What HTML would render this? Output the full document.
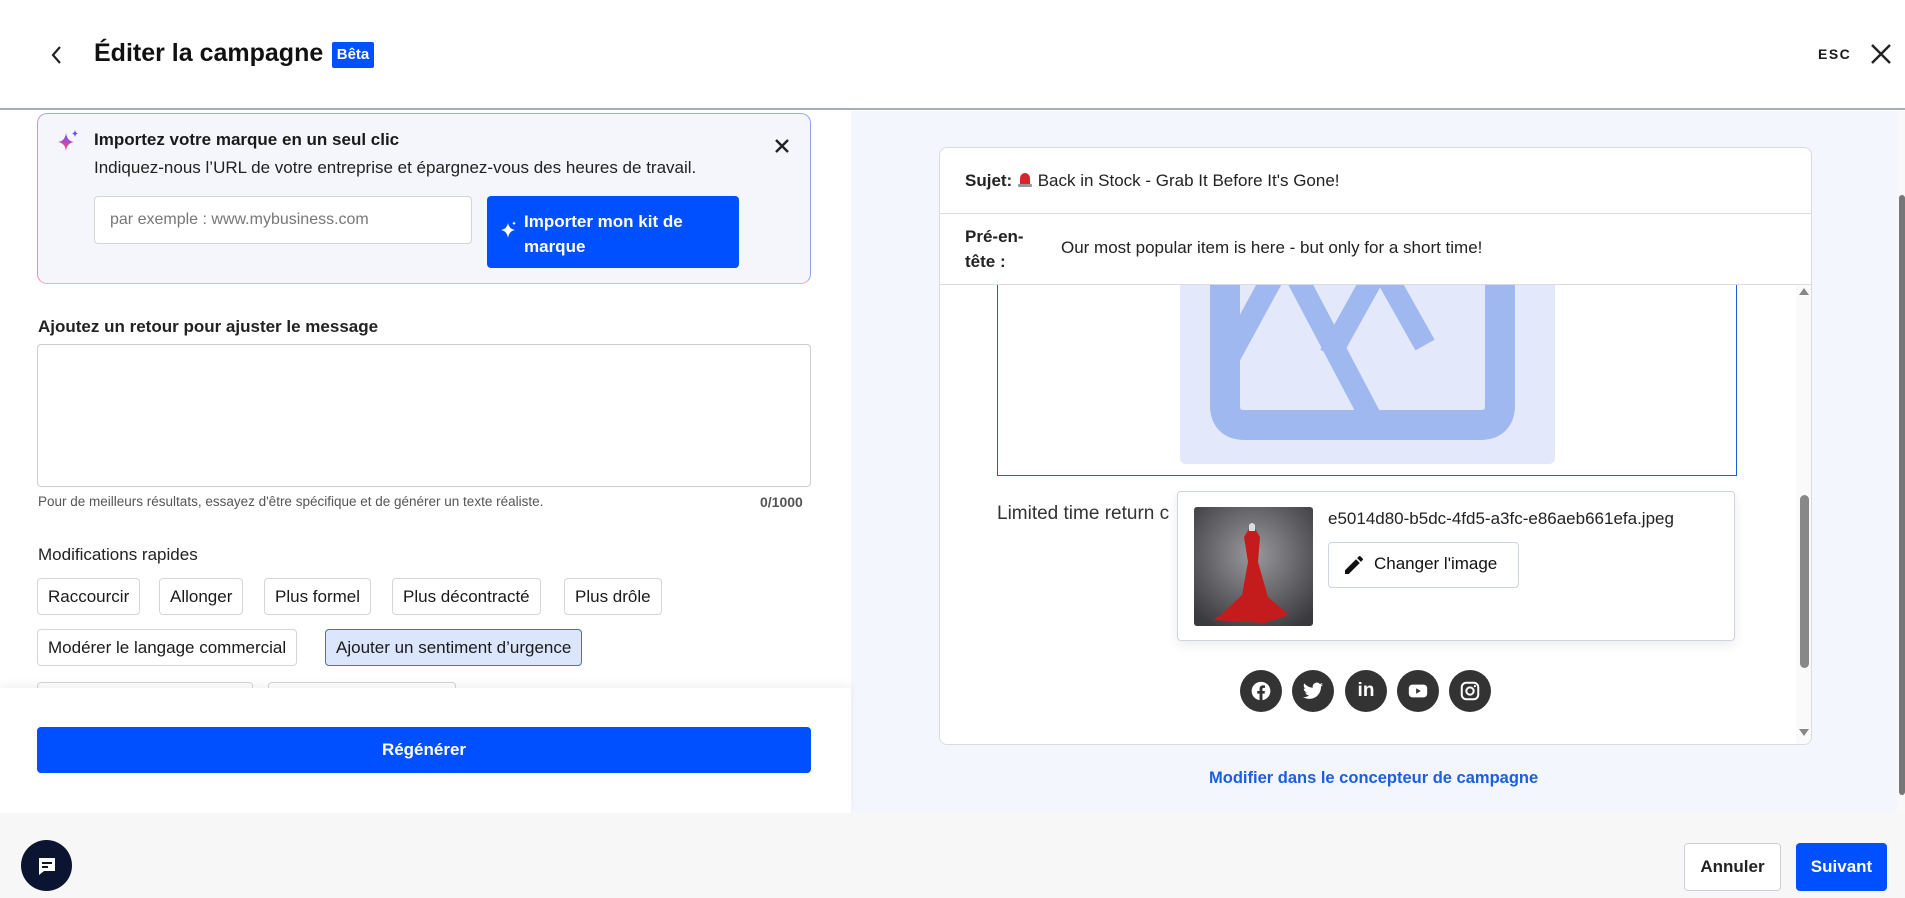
<!DOCTYPE html>
<html><head><meta charset="utf-8"><style>
*{box-sizing:border-box;margin:0;padding:0}
body{width:1905px;height:898px;overflow:hidden;font-family:"Liberation Sans",sans-serif;color:#1a1a1a;background:#fff;position:relative}
.abs{position:absolute}
.chip{position:absolute;height:37px;border:1px solid #d4d6dc;border-radius:4px;background:#fff;font-size:17px;line-height:35px;padding:0 10px;color:#1a1a1a;white-space:nowrap}
.soc{position:absolute;top:670px;width:42px;height:42px;border-radius:50%;background:#333;display:flex;align-items:center;justify-content:center}
</style></head><body>
<!-- header -->
<div class="abs" style="left:0;top:0;width:1905px;height:110px;background:#fff;border-bottom:2px solid #a9adb8"></div>
<svg class="abs" style="left:48px;top:44px" width="18" height="22" viewBox="0 0 18 22"><path d="M12 3L5 11l7 8" stroke="#222" stroke-width="2.2" fill="none"/></svg>
<div class="abs" style="left:94px;top:39px;font-size:25px;font-weight:bold;color:#111">Éditer la campagne</div>
<div class="abs" style="left:332px;top:42px;width:42px;height:26px;background:#0050ff;color:#fff;font-size:15px;font-weight:bold;line-height:26px;text-align:center;border-radius:2px">Bêta</div>
<div class="abs" style="left:1818px;top:46px;font-size:14px;font-weight:bold;letter-spacing:1.5px">ESC</div>
<svg class="abs" style="left:1870px;top:43px" width="22" height="22" viewBox="0 0 22 22"><path d="M2 2L20 20M20 2L2 20" stroke="#222" stroke-width="2.4"/></svg>

<!-- right panel bg -->
<div class="abs" style="left:851px;top:111px;width:1046px;height:702px;background:#f3f6fd"></div>
<div class="abs" style="left:1897px;top:111px;width:8px;height:702px;background:#f8f8f8"></div>
<div class="abs" style="left:1899px;top:195px;width:6px;height:600px;background:#777;border-radius:3px"></div>

<!-- import card -->
<div class="abs" style="left:37px;top:113px;width:774px;height:171px;border-radius:10px;background:#f5f6fc;border:1px solid #c8c4e8;border-left-color:#e890b0;border-bottom-color:#eab0c4;border-top-color:#9aa8ee;border-right-color:#8fa4f0"></div>
<svg class="abs" style="left:56px;top:129px" width="24" height="26" viewBox="0 0 24 26"><defs><linearGradient id="g" x1="0" y1="0" x2="0" y2="1"><stop offset="0" stop-color="#6a4cff"/><stop offset="1" stop-color="#ff4d7a"/></linearGradient></defs><path d="M10 4Q11 12 18 13Q11 14 10 22Q9 14 2 13Q9 12 10 4Z" fill="url(#g)"/><path d="M19 1Q19.5 4 22 4.5Q19.5 5 19 8Q18.5 5 16 4.5Q18.5 4 19 1Z" fill="#6a4cff"/></svg>
<div class="abs" style="left:94px;top:130px;font-size:17px;font-weight:bold">Importez votre marque en un seul clic</div>
<div class="abs" style="left:94px;top:158px;font-size:17px;color:#222">Indiquez-nous l’URL de votre entreprise et épargnez-vous des heures de travail.</div>
<svg class="abs" style="left:774px;top:138px" width="16" height="16" viewBox="0 0 16 16"><path d="M2 2L14 14M14 2L2 14" stroke="#222" stroke-width="2.4"/></svg>
<div class="abs" style="left:94px;top:196px;width:378px;height:48px;background:#fff;border:1px solid #d4d6dc;border-radius:4px;font-size:16px;color:#777;line-height:46px;padding-left:15px">par exemple : www.mybusiness.com</div>
<div class="abs" style="left:487px;top:196px;width:252px;height:72px;background:#0050ff;border-radius:4px"></div>
<svg class="abs" style="left:501px;top:221px" width="16" height="18" viewBox="0 0 16 18"><path d="M7 2Q8 8 14 9Q8 10 7 17Q6 10 0 9Q6 8 7 2Z" fill="#fff"/><path d="M13 0Q13.3 2 15 2.3Q13.3 2.6 13 4.5Q12.7 2.6 11 2.3Q12.7 2 13 0Z" fill="#fff"/></svg>
<div class="abs" style="left:524px;top:209px;font-size:17px;font-weight:bold;color:#fff;line-height:25px">Importer mon kit de<br>marque</div>

<!-- feedback -->
<div class="abs" style="left:38px;top:317px;font-size:17px;font-weight:bold;color:#222">Ajoutez un retour pour ajuster le message</div>
<div class="abs" style="left:37px;top:344px;width:774px;height:143px;border:1px solid #c9ccd3;border-radius:4px;background:#fff"></div>
<div class="abs" style="left:38px;top:494px;font-size:13.5px;color:#555">Pour de meilleurs résultats, essayez d'être spécifique et de générer un texte réaliste.</div>
<div class="abs" style="left:760px;top:494px;font-size:14px;color:#555;font-weight:bold">0/1000</div>

<div class="abs" style="left:38px;top:545px;font-size:17px;color:#222">Modifications rapides</div>
<div class="chip" style="left:37px;top:578px">Raccourcir</div>
<div class="chip" style="left:159px;top:578px">Allonger</div>
<div class="chip" style="left:264px;top:578px">Plus formel</div>
<div class="chip" style="left:392px;top:578px">Plus décontracté</div>
<div class="chip" style="left:564px;top:578px">Plus drôle</div>
<div class="chip" style="left:37px;top:629px">Modérer le langage commercial</div>
<div class="chip" style="left:325px;top:629px;background:#dbe6fd;border-color:#3b6ff0">Ajouter un sentiment d’urgence</div>
<div class="chip" style="left:37px;top:682px;width:216px"></div>
<div class="chip" style="left:268px;top:682px;width:188px"></div>
<!-- footer of left panel -->
<div class="abs" style="left:0;top:688px;width:851px;height:125px;background:#fff;box-shadow:0 -4px 8px rgba(0,0,0,0.05)"></div>
<div class="abs" style="left:37px;top:727px;width:774px;height:46px;background:#0050ff;border-radius:4px;color:#fff;font-weight:bold;font-size:17px;text-align:center;line-height:46px">Régénérer</div>

<!-- preview card -->
<div class="abs" style="left:939px;top:147px;width:873px;height:598px;background:#fff;border:1px solid #d8dbe2;border-radius:8px;overflow:hidden">
  <div class="abs" style="left:0;top:0;width:873px;height:66px;border-bottom:1px solid #d8dbe2"></div>
  <div class="abs" style="left:25px;top:23px;font-size:17px;color:#222"><b>Sujet:</b> <svg width="16" height="17" viewBox="0 0 16 17" style="vertical-align:-2px"><path d="M3 13V7a5 5 0 0 1 10 0v6z" fill="#d9232d"/><rect x="1" y="13" width="14" height="3" rx="1" fill="#999"/></svg> Back in Stock - Grab It Before It's Gone!</div>
  <div class="abs" style="left:0;top:66px;width:873px;height:71px;border-bottom:1px solid #d8dbe2"></div>
  <div class="abs" style="left:25px;top:76px;font-size:17px;font-weight:bold;line-height:25px;color:#222">Pré-en-<br>tête :</div>
  <div class="abs" style="left:121px;top:90px;font-size:17px;color:#222">Our most popular item is here - but only for a short time!</div>
  <!-- image block -->
  <div class="abs" style="left:57px;top:137px;width:740px;height:191px;border:1px solid #1a5fe0;border-top:none"></div>
  <div class="abs" style="left:240px;top:137px;width:375px;height:179px;background:#e3e9fb;border-radius:0 0 6px 6px;overflow:hidden">
    <svg width="375" height="179" viewBox="0 0 375 179"><path d="M45 0V120Q45 140 65 140H300Q320 140 320 120V0" stroke="#a0b8f0" stroke-width="30" fill="none"/><path d="M45 80L105 -30L200 150M150 70L200 -20L245 60" stroke="#a0b8f0" stroke-width="22" fill="none"/></svg>
  </div>
  <div class="abs" style="left:57px;top:355px;font-size:19px;color:#333">Limited time return c</div>
  <!-- scrollbar -->
  <div class="abs" style="left:856px;top:137px;width:17px;height:461px;background:#fafafa"></div>
  <div class="abs" style="left:859px;top:140px;width:0;height:0;border-left:5px solid transparent;border-right:5px solid transparent;border-bottom:7px solid #888"></div>
  <div class="abs" style="left:859px;top:581px;width:0;height:0;border-left:5px solid transparent;border-right:5px solid transparent;border-top:7px solid #888"></div>
  <div class="abs" style="left:860px;top:347px;width:9px;height:173px;background:#888;border-radius:5px"></div>
</div>
<!-- popup -->
<div class="abs" style="left:1177px;top:491px;width:558px;height:150px;background:#fff;border:1px solid #cdd3e0;border-radius:4px;box-shadow:0 4px 12px rgba(0,0,0,0.08)"></div>
<svg class="abs" style="left:1194px;top:507px;border-radius:3px" width="119" height="119" viewBox="0 0 119 119"><defs><radialGradient id="bg" cx="0.5" cy="0.4" r="0.7"><stop offset="0" stop-color="#9a9a9e"/><stop offset="1" stop-color="#3a3a3e"/></radialGradient></defs><rect width="119" height="119" fill="url(#bg)"/><path d="M56 20L60 20L66 30L64 55L74 90L95 108L70 116L20 113L30 105L48 88L54 55L50 30Z" fill="#c41c1c"/><path d="M55 18Q58 14 61 18L61 24L55 24Z" fill="#ddd"/></svg>
<div class="abs" style="left:1328px;top:509px;font-size:17px;color:#222">e5014d80-b5dc-4fd5-a3fc-e86aeb661efa.jpeg</div>
<div class="abs" style="left:1328px;top:542px;width:191px;height:46px;border:1px solid #cdd3e0;border-radius:4px;background:#fff"></div>
<svg class="abs" style="left:1342px;top:553px" width="24" height="24" viewBox="0 0 24 24"><path d="M3 17.25V21h3.75L17.81 9.94l-3.75-3.75L3 17.25zM20.71 7.04a1 1 0 0 0 0-1.41l-2.34-2.34a1 1 0 0 0-1.41 0l-1.830 1.83 3.75 3.75 1.83-1.83z" fill="#111"/></svg>
<div class="abs" style="left:1374px;top:554px;font-size:17px;color:#111">Changer l'image</div>
<!-- social -->
<div class="soc" style="left:1240px"><svg width="22" height="22" viewBox="0 0 24 24"><path d="M12 2a10 10 0 0 0-1.6 19.9V14.9H7.9V12h2.5V9.8c0-2.5 1.5-3.9 3.8-3.9 1.1 0 2.2.2 2.2.2v2.5h-1.3c-1.2 0-1.6.8-1.6 1.6V12h2.8l-.4 2.9h-2.3v7A10 10 0 0 0 12 2z" fill="#fff"/></svg></div>
<div class="soc" style="left:1292px"><svg width="22" height="22" viewBox="0 0 24 24"><path d="M23 5a9 9 0 0 1-2.6.7 4.5 4.5 0 0 0 2-2.5 9 9 0 0 1-2.9 1.1A4.5 4.5 0 0 0 11.8 8.4 12.8 12.8 0 0 1 2.5 3.7a4.5 4.5 0 0 0 1.4 6 4.5 4.5 0 0 1-2-.6 4.5 4.5 0 0 0 3.6 4.5 4.5 4.5 0 0 1-2 .1 4.5 4.5 0 0 0 4.2 3.1A9 9 0 0 1 1 18.6 12.8 12.8 0 0 0 7.9 20.6c8.3 0 12.8-6.9 12.8-12.8v-.6A9 9 0 0 0 23 5z" fill="#fff"/></svg></div>
<div class="soc" style="left:1345px"><span style="color:#fff;font-weight:bold;font-size:19px">in</span></div>
<div class="soc" style="left:1397px"><svg width="22" height="22" viewBox="0 0 24 24"><rect x="2" y="5" width="20" height="14" rx="4" fill="#fff"/><path d="M10 9l5 3-5 3z" fill="#333"/></svg></div>
<div class="soc" style="left:1449px"><svg width="22" height="22" viewBox="0 0 24 24"><rect x="3" y="3" width="18" height="18" rx="5" stroke="#fff" stroke-width="2.2" fill="none"/><circle cx="12" cy="12" r="4" stroke="#fff" stroke-width="2.2" fill="none"/><circle cx="17.3" cy="6.7" r="1.2" fill="#fff"/></svg></div>

<div class="abs" style="left:1209px;top:769px;font-size:16.5px;font-weight:bold;color:#1a5fe0">Modifier dans le concepteur de campagne</div>

<!-- bottom bar -->
<div class="abs" style="left:0;top:813px;width:1905px;height:85px;background:#f7f7f8"></div>
<div class="abs" style="left:21px;top:840px;width:51px;height:51px;border-radius:50%;background:#0b1531;display:flex;align-items:center;justify-content:center"><svg width="24" height="24" viewBox="0 0 24 24"><path d="M4 4h16v13H9l-5 4z" fill="#fff"/><rect x="7" y="8" width="10" height="2" fill="#0b1531"/><rect x="7" y="12" width="6" height="2" fill="#0b1531"/></svg></div>
<div class="abs" style="left:1684px;top:843px;width:97px;height:48px;border:1px solid #cdd0d6;border-radius:4px;background:#fff;font-size:17px;font-weight:bold;text-align:center;line-height:46px;color:#222">Annuler</div>
<div class="abs" style="left:1796px;top:843px;width:91px;height:48px;border-radius:4px;background:#0050ff;font-size:17px;font-weight:bold;text-align:center;line-height:48px;color:#fff">Suivant</div>
</body></html>
